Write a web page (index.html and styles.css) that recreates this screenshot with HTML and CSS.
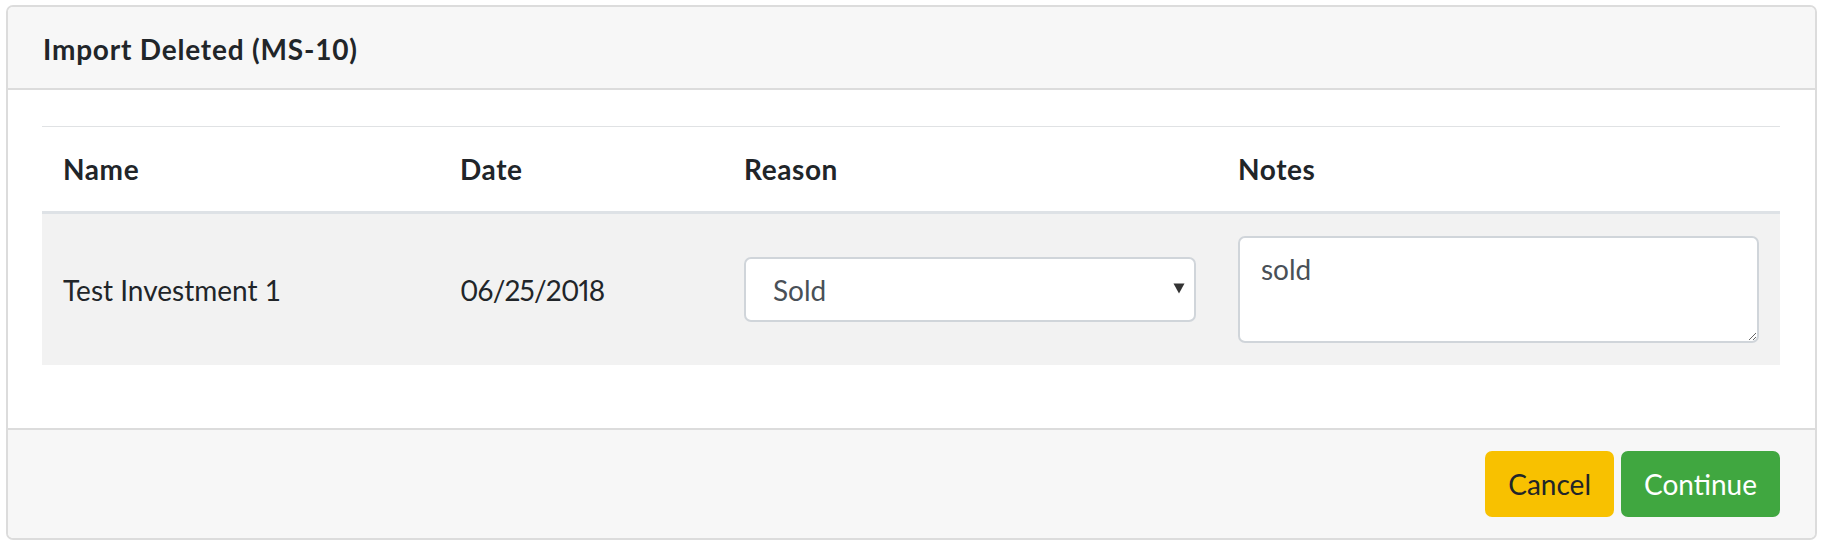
FILE: index.html
```html
<!DOCTYPE html>
<html>
<head>
<meta charset="utf-8">
<link rel="stylesheet" href="styles.css">
</head>
<body>
<div class="card">
  <div class="card-header">Import Deleted (MS-10)</div>
  <div class="card-body">
    <table class="table">
      <thead>
        <tr>
          <th class="col-name">Name</th>
          <th class="col-date">Date</th>
          <th class="col-reason">Reason</th>
          <th class="col-notes">Notes</th>
        </tr>
      </thead>
      <tbody>
        <tr>
          <td>Test Investment 1</td>
          <td class="date">06/25/2018</td>
          <td>
            <div class="select-wrap">
              <select class="form-control select">
                <option>Sold</option>
              </select>
              <svg class="caret" width="12" height="11" viewBox="0 0 12 11"><path d="M0.5 0.5 L11.5 0.5 L6 10.5 Z" fill="#333"/></svg>
            </div>
          </td>
          <td><textarea class="form-control notes">sold</textarea></td>
        </tr>
      </tbody>
    </table>
  </div>
  <div class="card-footer">
    <button class="btn btn-warning">Cancel</button>
    <button class="btn btn-success">Continue</button>
  </div>
</div>
</body>
</html>
```

FILE: styles.css
```css
html, body {
  margin: 0;
  padding: 0;
  background: #fff;
}
body {
  padding: 5px 6px 0 6px;
  font-family: "Lato", "Open Sans", sans-serif;
  font-size: 28px;
  line-height: 42px;
  color: #212529;
}
.card {
  border: 2px solid #dcdcdc;
  border-radius: 7px;
  background: #fff;
  overflow: hidden;
}
.card-header {
  background: #f7f7f7;
  border-bottom: 2px solid #dcdcdc;
  padding: 21px 35px 18px 35px;
  font-weight: bold;
  line-height: 42px;
  letter-spacing: 0.8px;
}
.card-body {
  padding: 36px 35px 35px 34px;
}
.table {
  width: 100%;
  border-collapse: collapse;
  margin-bottom: 28px;
  table-layout: fixed;
}
.table th, .table td {
  padding: 21px;
  text-align: left;
  vertical-align: middle;
}
.table th {
  font-weight: bold;
  letter-spacing: 0.6px;
  border-top: 1px solid #e0e2e4;
  border-bottom: 3px solid #dee2e6;
  padding-top: 21px;
  padding-bottom: 21px;
}
.table tbody tr {
  background: #f2f2f2;
}
.table td {
  padding-top: 22px;
  padding-bottom: 22px;
}
.date {
  font-variant-numeric: proportional-nums;
  letter-spacing: -0.8px;
}
.col-name { width: 355px; }
.col-date { width: 242px; }
.col-reason { width: 452px; }
.col-notes { width: auto; }
.form-control {
  display: block;
  width: 100%;
  box-sizing: border-box;
  border: 2px solid #d0d5da;
  border-radius: 7px;
  background: #fff;
  color: #495057;
  font-family: inherit;
  font-size: 28px;
  line-height: 42px;
  margin: 0;
}
.select-wrap {
  position: relative;
}
.select {
  -webkit-appearance: none;
  appearance: none;
  height: 65px;
  padding: 0 40px 0 27px;
}
.caret {
  position: absolute;
  right: 11px;
  top: 26px;
  pointer-events: none;
}
.notes {
  height: 107px;
  padding: 10px 21px 8px 21px;
  resize: vertical;
}
.card-footer {
  background: #f7f7f7;
  border-top: 2px solid #dcdcdc;
  padding: 21px 35px 21px 35px;
  display: flex;
  justify-content: flex-end;
  gap: 7px;
}
.btn {
  font-family: inherit;
  font-size: 28px;
  line-height: 42px;
  padding: 10px 21px;
  border: 2px solid transparent;
  border-radius: 7px;
  cursor: pointer;
  margin: 0;
}
.btn-warning {
  background: #f8c100;
  border-color: #f8c100;
  color: #212529;
}
.btn-success {
  background: #40a740;
  border-color: #40a740;
  color: #fff;
}
```
